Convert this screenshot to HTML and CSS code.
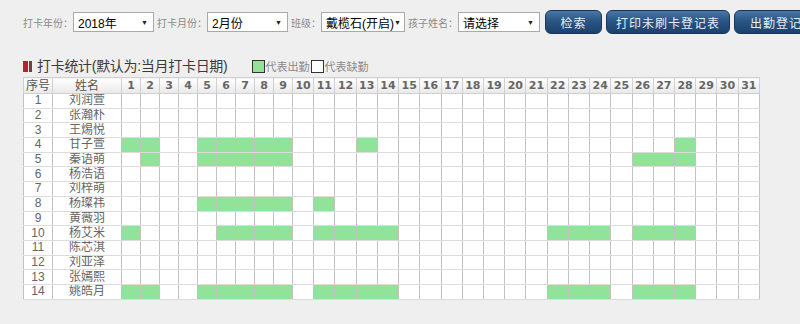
FILE: index.html
```html
<!DOCTYPE html>
<html>
<head>
<meta charset="utf-8" />
<title>打卡统计</title>
<link rel="stylesheet" href="styles.css">
</head>
<body>
	<div class="toolbar">
		<span class="label">打卡年份：</span>
		<div class="select w81"><span>2018年</span><i>▼</i></div>
		<span class="label">打卡月份：</span>
		<div class="select w81"><span>2月份</span><i>▼</i></div>
		<span class="label">班级：</span>
		<div class="select w84"><span>戴榄石(开启)</span><i>▼</i></div>
		<span class="label">孩子姓名：</span>
		<div class="select w82"><span>请选择</span><i>▼</i></div>
		<a class="btn b1">检索</a>
		<a class="btn b2">打印未刷卡登记表</a>
		<a class="btn b3">出勤登记表</a>
	</div>

	<div class="boxtitle">
		<span class="mark"><b></b><em></em></span>
		<span class="titletext">打卡统计(默认为:当月打卡日期)</span>
		<span class="legend"><i class="box on"></i>代表出勤<i class="box"></i>代表缺勤</span>
	</div>

	<table class="grid">
		<colgroup>
			<col class="c-no"><col class="c-name">
			<col class="c-d"><col class="c-d"><col class="c-d"><col class="c-d"><col class="c-d"><col class="c-d"><col class="c-d"><col class="c-d"><col class="c-d">
		</colgroup>
		<tr class="head">
			<th class="cn">序号</th><th class="cn">姓名</th>
			<th>1</th><th>2</th><th>3</th><th>4</th><th>5</th><th>6</th><th>7</th><th>8</th><th>9</th><th>10</th>
			<th>11</th><th>12</th><th>13</th><th>14</th><th>15</th><th>16</th><th>17</th><th>18</th><th>19</th><th>20</th>
			<th>21</th><th>22</th><th>23</th><th>24</th><th>25</th><th>26</th><th>27</th><th>28</th><th>29</th><th>30</th><th>31</th>
		</tr>
		<tr><td>1</td><td>刘润萱</td><td></td><td></td><td></td><td></td><td></td><td></td><td></td><td></td><td></td><td></td><td></td><td></td><td></td><td></td><td></td><td></td><td></td><td></td><td></td><td></td><td></td><td></td><td></td><td></td><td></td><td></td><td></td><td></td><td></td><td></td><td></td></tr>
		<tr><td>2</td><td>张瀚朴</td><td></td><td></td><td></td><td></td><td></td><td></td><td></td><td></td><td></td><td></td><td></td><td></td><td></td><td></td><td></td><td></td><td></td><td></td><td></td><td></td><td></td><td></td><td></td><td></td><td></td><td></td><td></td><td></td><td></td><td></td><td></td></tr>
		<tr><td>3</td><td>王焬悦</td><td></td><td></td><td></td><td></td><td></td><td></td><td></td><td></td><td></td><td></td><td></td><td></td><td></td><td></td><td></td><td></td><td></td><td></td><td></td><td></td><td></td><td></td><td></td><td></td><td></td><td></td><td></td><td></td><td></td><td></td><td></td></tr>
		<tr><td>4</td><td>甘子萱</td><td class="on"></td><td class="on"></td><td></td><td></td><td class="on"></td><td class="on"></td><td class="on"></td><td class="on"></td><td class="on"></td><td></td><td></td><td></td><td class="on"></td><td></td><td></td><td></td><td></td><td></td><td></td><td></td><td></td><td></td><td></td><td></td><td></td><td></td><td></td><td class="on"></td><td></td><td></td><td></td></tr>
		<tr><td>5</td><td>秦语萌</td><td></td><td class="on"></td><td></td><td></td><td class="on"></td><td class="on"></td><td class="on"></td><td class="on"></td><td class="on"></td><td></td><td></td><td></td><td></td><td></td><td></td><td></td><td></td><td></td><td></td><td></td><td></td><td></td><td></td><td></td><td></td><td class="on"></td><td class="on"></td><td class="on"></td><td></td><td></td><td></td></tr>
		<tr><td>6</td><td>杨浩语</td><td></td><td></td><td></td><td></td><td></td><td></td><td></td><td></td><td></td><td></td><td></td><td></td><td></td><td></td><td></td><td></td><td></td><td></td><td></td><td></td><td></td><td></td><td></td><td></td><td></td><td></td><td></td><td></td><td></td><td></td><td></td></tr>
		<tr><td>7</td><td>刘梓萌</td><td></td><td></td><td></td><td></td><td></td><td></td><td></td><td></td><td></td><td></td><td></td><td></td><td></td><td></td><td></td><td></td><td></td><td></td><td></td><td></td><td></td><td></td><td></td><td></td><td></td><td></td><td></td><td></td><td></td><td></td><td></td></tr>
		<tr><td>8</td><td>杨璨祎</td><td></td><td></td><td></td><td></td><td class="on"></td><td class="on"></td><td class="on"></td><td class="on"></td><td class="on"></td><td></td><td class="on"></td><td></td><td></td><td></td><td></td><td></td><td></td><td></td><td></td><td></td><td></td><td></td><td></td><td></td><td></td><td></td><td></td><td></td><td></td><td></td><td></td></tr>
		<tr><td>9</td><td>黄薇羽</td><td></td><td></td><td></td><td></td><td></td><td></td><td></td><td></td><td></td><td></td><td></td><td></td><td></td><td></td><td></td><td></td><td></td><td></td><td></td><td></td><td></td><td></td><td></td><td></td><td></td><td></td><td></td><td></td><td></td><td></td><td></td></tr>
		<tr><td>10</td><td>杨艾米</td><td class="on"></td><td></td><td></td><td></td><td></td><td class="on"></td><td class="on"></td><td class="on"></td><td class="on"></td><td></td><td class="on"></td><td class="on"></td><td class="on"></td><td class="on"></td><td></td><td></td><td></td><td></td><td></td><td></td><td></td><td class="on"></td><td class="on"></td><td class="on"></td><td></td><td class="on"></td><td class="on"></td><td class="on"></td><td></td><td></td><td></td></tr>
		<tr><td>11</td><td>陈芯淇</td><td></td><td></td><td></td><td></td><td></td><td></td><td></td><td></td><td></td><td></td><td></td><td></td><td></td><td></td><td></td><td></td><td></td><td></td><td></td><td></td><td></td><td></td><td></td><td></td><td></td><td></td><td></td><td></td><td></td><td></td><td></td></tr>
		<tr><td>12</td><td>刘亚泽</td><td></td><td></td><td></td><td></td><td></td><td></td><td></td><td></td><td></td><td></td><td></td><td></td><td></td><td></td><td></td><td></td><td></td><td></td><td></td><td></td><td></td><td></td><td></td><td></td><td></td><td></td><td></td><td></td><td></td><td></td><td></td></tr>
		<tr><td>13</td><td>张嫣熙</td><td></td><td></td><td></td><td></td><td></td><td></td><td></td><td></td><td></td><td></td><td></td><td></td><td></td><td></td><td></td><td></td><td></td><td></td><td></td><td></td><td></td><td></td><td></td><td></td><td></td><td></td><td></td><td></td><td></td><td></td><td></td></tr>
		<tr><td>14</td><td>姚皓月</td><td class="on"></td><td class="on"></td><td></td><td></td><td class="on"></td><td class="on"></td><td class="on"></td><td class="on"></td><td class="on"></td><td></td><td class="on"></td><td class="on"></td><td class="on"></td><td class="on"></td><td></td><td></td><td></td><td></td><td></td><td></td><td></td><td class="on"></td><td class="on"></td><td class="on"></td><td></td><td class="on"></td><td class="on"></td><td class="on"></td><td></td><td></td><td></td></tr>
	</table>
</body>
</html>
```

FILE: styles.css
```css
body {
	margin: 0;
	background: #efefef;
	font-family: "Liberation Sans", "Noto Sans CJK SC", sans-serif;
	font-size: 12px;
	color: #333;
}

.toolbar {
	display: flex;
	align-items: center;
	height: 24px;
	padding: 10px 0 0 23px;
	white-space: nowrap;
	overflow: hidden;
}

.toolbar > * {
	flex: none;
}

.toolbar .label {
	color: #8a8a8a;
	font-size: 10px;
	margin-left: 3px;
}

.toolbar .label:first-child {
	margin-left: 0;
}

.select {
	display: flex;
	justify-content: space-between;
	align-items: center;
	box-sizing: border-box;
	height: 20px;
	padding: 0 5px 0 4px;
	border: 1px solid #a9a9a9;
	background: #fff;
	color: #000;
	font-size: 12px;
}

.select i {
	font-style: normal;
	font-size: 7px;
	color: #222;
}

.w81 { width: 81px; }
.w82 { width: 82px; }
.w84 { width: 84px; }

.btn {
	display: flex;
	align-items: center;
	justify-content: center;
	box-sizing: border-box;
	height: 24px;
	margin-left: 4px;
	border: 1px solid #18365a;
	border-radius: 6px;
	background: linear-gradient(#4a78a6, #2a5584 45%, #1d416c);
	color: #e6edf5;
	font-size: 12px;
	letter-spacing: 1px;
}

.b1 { width: 57px; margin-left: 5px; }
.b2 { width: 124px; }
.b3 { width: 97px; }

.boxtitle {
	display: flex;
	align-items: flex-end;
	height: 23px;
	margin: 20px 0 0 23px;
}

.mark {
	display: flex;
	gap: 1px;
	margin: 0 5px 5px 0;
}

.mark b {
	width: 5px;
	height: 11px;
	background: #b8232b;
}

.mark em {
	width: 3px;
	height: 11px;
	background: #7c3a3e;
}

.titletext {
	font-size: 14px;
	letter-spacing: -0.3px;
	color: #3a3a3a;
	line-height: 22px;
}

.legend {
	display: flex;
	align-items: center;
	margin: 0 0 3px 25px;
	color: #8a8a8a;
	font-size: 11px;
}

.legend .box {
	box-sizing: border-box;
	width: 13px;
	height: 13px;
	border: 1px solid #333;
	background: #fff;
	margin-left: 2px;
}

.legend .box.on {
	background: #92e39a;
	margin-left: 0;
}

.grid {
	table-layout: fixed;
	width: 737px;
	margin-left: 23px;
	border-collapse: collapse;
	background: #fff;
	border: 1px solid #c4c4c4;
}

.grid .c-no { width: 29px; }
.grid .c-name { width: 69px; }
.grid .c-d { width: 19px; }

.grid th {
	height: 15px;
	padding: 0;
	border: 1px solid #d0d0d0;
	background: linear-gradient(#ffffff, #e9e9e9);
	color: #666;
	font-family: "DejaVu Sans", sans-serif;
	font-weight: bold;
	font-size: 11px;
	line-height: 14px;
}

.grid th.cn {
	font-family: "Liberation Sans", "Noto Sans CJK SC", sans-serif;
	font-weight: normal;
	font-size: 12px;
	color: #555;
}

.grid td {
	height: 13.7px;
	padding: 0;
	border-left: 1px solid #c2c2c2;
	border-right: 1px solid #c2c2c2;
	border-top: 1px solid #dcdcdc;
	border-bottom: 1px solid #dcdcdc;
	text-align: center;
	color: #666;
	font-size: 12px;
	line-height: 13px;
	overflow: hidden;
}

.grid td.on {
	background: #92e39a;
}
```
